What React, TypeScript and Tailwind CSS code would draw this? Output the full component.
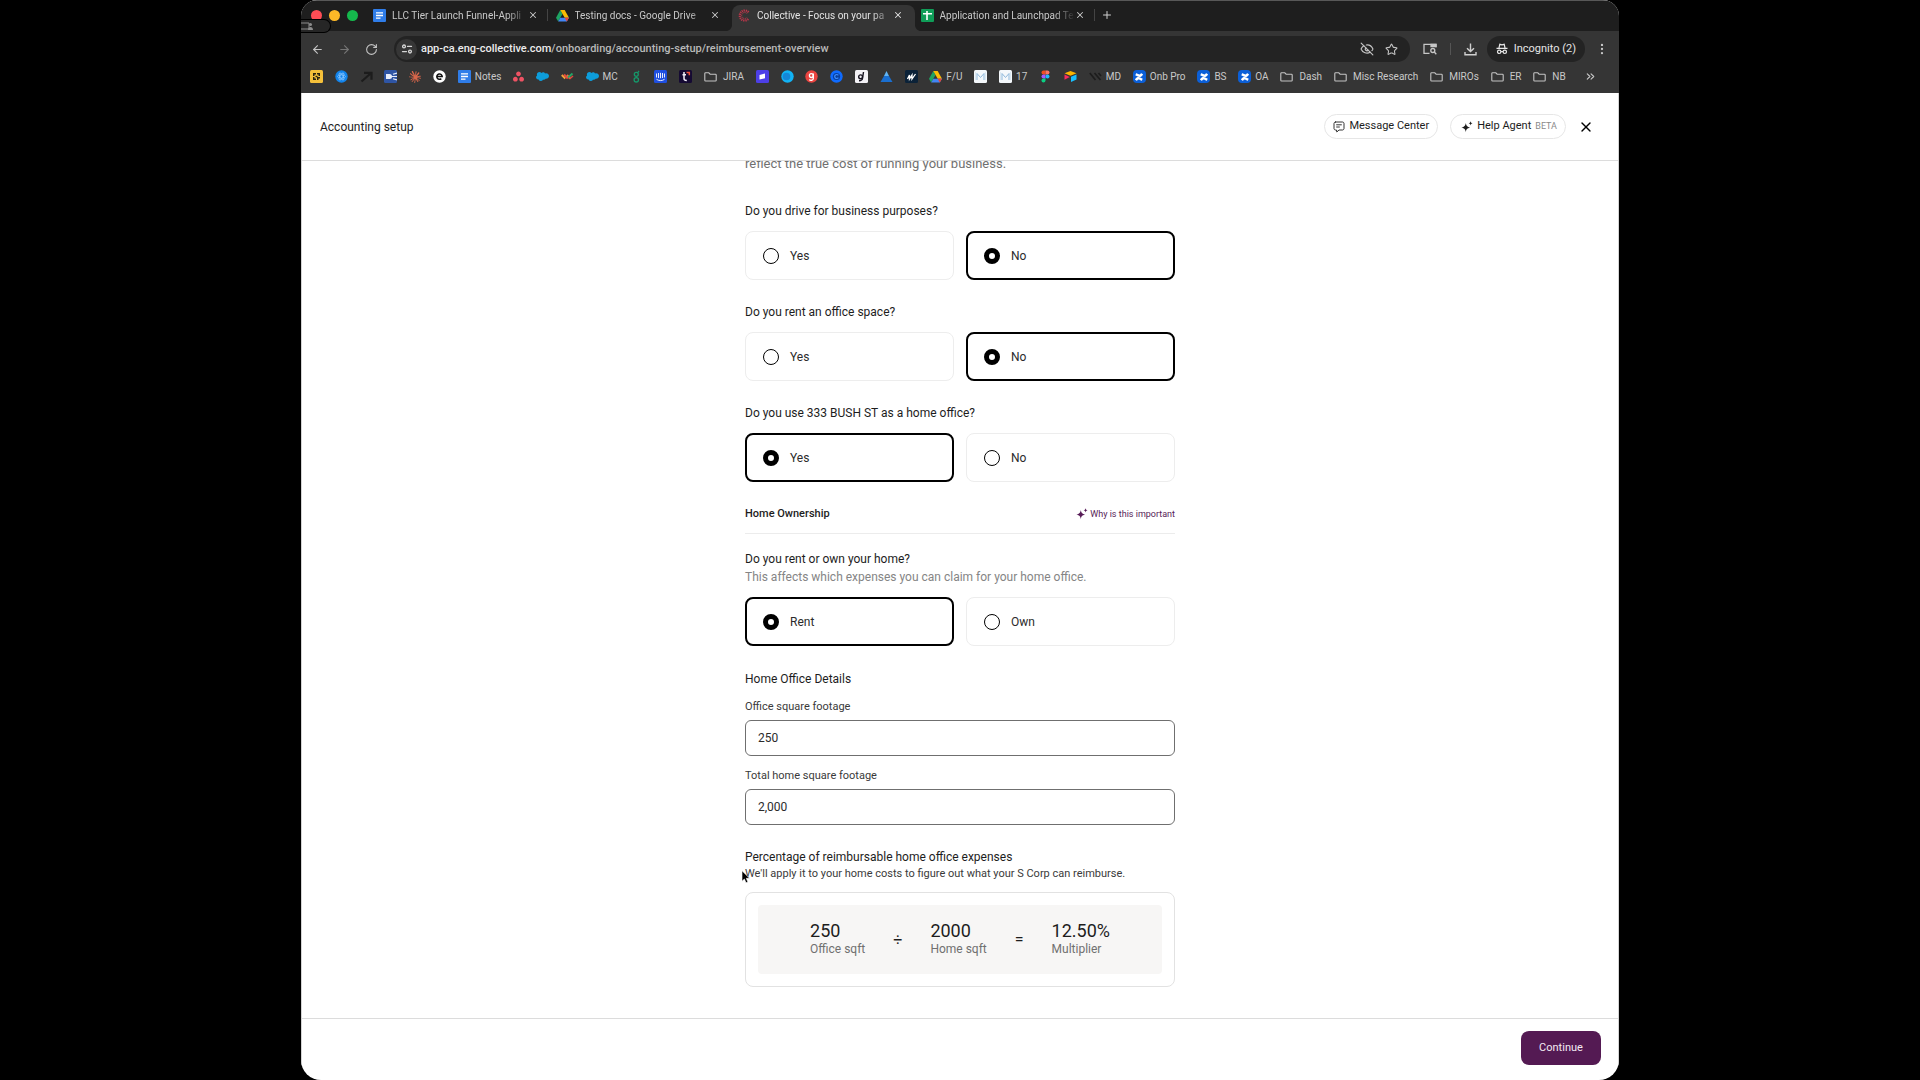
import React, { useState } from "react";
import { ArrowLeft, ArrowRight, RotateCw, Star, X, Plus, EyeOff, MoreVertical, ChevronsRight } from "lucide-react";
import { SiAsana, SiSalesforce, SiClaude, SiConfluence } from "react-icons/si";

/* ---------- icons ---------- */

const DocIcon = () => (
    <svg viewBox="0 0 13 13" className="w-[13px] h-[13px] shrink-0">
        <rect width="13" height="13" rx="1" fill="#2f7de9" />
        <path d="M3 3.8h7M3 6.5h7M3 9.2h4.5" stroke="#fff" strokeWidth="1.3" />
    </svg>
);

const DriveIcon = () => (
    <svg viewBox="0 0 24 22" className="w-[13px] h-[13px] shrink-0">
        <path d="M8 1h8l-4 7z" fill="#188038" />
        <path d="M8 1 0 15l4 7 8-14z" fill="#1ea362" />
        <path d="M16 1 24 15h-8L8 1z" fill="#fbbc04" />
        <path d="M8 15h16l-4 7H4z" fill="#4285f4" />
        <path d="M16 15h8l-4 7z" fill="#ea4335" />
    </svg>
);

const SheetsIcon = () => (
    <svg viewBox="0 0 13 13" className="w-[13px] h-[13px] shrink-0">
        <rect width="13" height="13" rx="1" fill="#0f9d58" />
        <path d="M2 4.8h9M6 2v9" stroke="#fff" strokeWidth="1.6" />
    </svg>
);

const CollectiveIcon = () => (
    <svg viewBox="0 0 13 13" className="w-[13px] h-[13px] shrink-0" fill="none" stroke="#c2364b">
        <path d="M10.5 3.2a5 5 0 1 0 0 6.6" strokeWidth="2.2" strokeDasharray="1.2 .8" />
        <path d="M9 4.6a3 3 0 1 0 0 3.8" strokeWidth="1" strokeDasharray="1 .7" />
    </svg>
);

const FolderIcon = () => (
    <svg viewBox="0 0 13 12" className="w-[13px] h-[12px] mr-[2px] shrink-0" fill="none" stroke="#c4c4c4" strokeWidth="1.1">
        <path d="M.8 2.6c0-.5.3-.8.8-.8h3.2l1.3 1.4h5.3c.5 0 .8.3.8.8v5.2c0 .5-.3.8-.8.8H1.6c-.5 0-.8-.3-.8-.8z" />
    </svg>
);

const Tile = ({ bg, children }: { bg: string; children?: React.ReactNode }) => (
    <svg viewBox="0 0 13 13" className="w-[13px] h-[13px] shrink-0">
        <rect width="13" height="13" rx="1.5" fill={bg} />
        {children}
    </svg>
);

const Disc = ({ bg, children }: { bg: string; children?: React.ReactNode }) => (
    <svg viewBox="0 0 13 13" className="w-[13px] h-[13px] shrink-0">
        <circle cx="6.5" cy="6.5" r="6.2" fill={bg} />
        {children}
    </svg>
);

const Glyph = ({ children }: { children: React.ReactNode }) => (
    <svg viewBox="0 0 13 13" className="w-[13px] h-[13px] shrink-0" fill="none">
        {children}
    </svg>
);

const ConfluenceTile = () => (
    <span className="w-[13px] h-[13px] shrink-0 rounded-sm bg-[#0b5fd8] text-white flex items-center justify-center">
        <SiConfluence size={8} />
    </span>
);

const MTile = () => (
    <Tile bg="#f4f8fb">
        <path d="M3 10V3.5l3.5 4 3.5-4V10" fill="none" stroke="#8fb9dc" strokeWidth="1" />
        <path d="M1.5 2.5v8M11.5 2.5v8" stroke="#b6cfe2" strokeWidth=".8" strokeDasharray="1 1" />
    </Tile>
);

const SparkleIcon = () => (
    <svg viewBox="0 0 12 12" className="w-3 h-3" fill="currentColor">
        <path d="M4.8 2c.5 3 1.300 3.800 4.400 4.600-3.100.8-3.900 1.600-4.400 4.600-.5-3-1.300-3.800-4.400-4.600 3.100-.8 3.900-1.600 4.400-4.600z" />
        <path d="M9.600.3c.3 1.300.7 1.700 2 2-1.300.4-1.700.8-2 2.100-.3-1.300-.8-1.700-2-2.100 1.200-.3 1.700-.7 2-2z" />
    </svg>
);

const MessageIcon = () => (
    <svg viewBox="0 0 12 12" className="w-3 h-3" fill="none" stroke="currentColor" strokeWidth=".9" strokeLinecap="round">
        <path d="M2.500 1h7c.8 0 1.500.7 1.500 1.500v5c0 .8-.7 1.500-1.500 1.500H6l-2.200 2L3.500 9h-1C1.700 9 1 8.300 1 7.500v-5C1 1.700 1.700 1 2.500 1z" />
        <path d="M3.600 3.800h4.800M3.600 6h2.800" />
    </svg>
);

const TuneIcon = () => (
    <svg viewBox="0 0 12 12" className="w-3 h-3" fill="none" stroke="#d6d6d6" strokeWidth="1.300" strokeLinecap="round">
        <circle cx="3" cy="3.400" r="1.400" />
        <path d="M6.500 3.400h4M1.500 8.600h4" />
        <circle cx="9" cy="8.600" r="1.400" />
    </svg>
);

const TabSearchIcon = () => (
    <svg viewBox="0 0 14 12" className="w-[14px] h-3" fill="none" stroke="#c7c7c7" strokeWidth="1.300">
        <path d="M6.500 10.400H1V1.300h12v3" />
        <path d="M8 1.300h5v2.400H8z" fill="#c7c7c7" />
        <circle cx="9.800" cy="7.500" r="2" />
        <path d="m11.300 9 2 2.200" />
    </svg>
);

const DownloadIcon = () => (
    <svg viewBox="0 0 13 13" className="w-[13px] h-[13px]" fill="none" stroke="#d0d0d0" strokeWidth="1.400">
        <path d="M6.500.5v7.800M3 5.200l3.500 3.400L10 5.200M1 9v2.800h11V9" />
    </svg>
);

const IncognitoIcon = () => (
    <svg viewBox="0 0 12 12" className="w-3 h-3" fill="none" stroke="#e6e6e6" strokeWidth="1.200">
        <path d="M3 4.800 3.800 1.300l2.200.6 2.200-.6L9 4.800M.5 5.400h11" />
        <circle cx="3.200" cy="8.800" r="1.700" />
        <circle cx="8.800" cy="8.800" r="1.700" />
        <path d="M4.900 8.600h2.200" />
    </svg>
);

/* ---------- browser data ---------- */

const tabs = [
    { title: "LLC Tier Launch Funnel-Appli", icon: <DocIcon />, active: false },
    { title: "Testing docs - Google Drive", icon: <DriveIcon />, active: false },
    { title: "Collective - Focus on your pa", icon: <CollectiveIcon />, active: true },
    { title: "Application and Launchpad Te", icon: <SheetsIcon />, active: false },
];

const bookmarks: { label?: string; icon: React.ReactNode }[] = [
    {
        icon: (
            <Tile bg="#f5c03a">
                <path d="M3 3h3v1.500H4.500V6H3zM7 3h3v3H8.500V4.500H7zM3 7h1.500v1.500H6V10H3zM7 7h3v1.500H8.500V10H7z" fill="#2b2410" />
                <path d="M5.500 5.800h2v1.400h-2z" fill="#2b2410" />
            </Tile>
        ),
    },
    {
        icon: (
            <Disc bg="#1283ea">
                <g fill="none" stroke="#8cc8ff" strokeWidth=".7">
                    <ellipse cx="6.500" cy="6.500" rx="4" ry="1.600" />
                    <ellipse cx="6.500" cy="6.500" rx="4" ry="1.600" transform="rotate(60 6.500 6.500)" />
                    <ellipse cx="6.500" cy="6.500" rx="4" ry="1.600" transform="rotate(120 6.500 6.500)" />
                </g>
            </Disc>
        ),
    },
    { icon: <Glyph><path d="M1.500 11.500 10 4M4 2.800h7.500v7" stroke="#1c1c1c" strokeWidth="2.200" /></Glyph> },
    {
        icon: (
            <Tile bg="#2f55a4">
                <path d="M2 4h3.500a2.500 2.500 0 0 1 0 5H2z" fill="#e8eefb" />
                <path d="M8 6.500h5M9 4.200 13 3M9 8.800l4 1.200" stroke="#e8eefb" strokeWidth="1.200" />
            </Tile>
        ),
    },
    { icon: <SiClaude size={12} className="text-[#d9664a]" /> },
    { icon: <Disc bg="#fff"><path d="M3.800 6.600h5.400a2.700 2.700 0 1 0-.9 2" fill="none" stroke="#111" strokeWidth="1.500" /></Disc> },
    { label: "Notes", icon: <DocIcon /> },
    { icon: <SiAsana size={11} className="text-[#ee5364]" /> },
    { icon: <SiSalesforce size={13} className="text-[#0d9ddb]" /> },
    {
        icon: (
            <Glyph>
                <path d="m.8 5 3.500 3.500" stroke="#f2a33a" strokeWidth="2" />
                <path d="m3 4.500 3.800 4" stroke="#e2483d" strokeWidth="2" />
                <path d="m6 5 3 3.500" stroke="#f2703a" strokeWidth="2" />
                <path d="M7 7.500 11.500 3.500" stroke="#23a566" strokeWidth="2" />
                <path d="m8.500 9 3.500-3" stroke="#e2483d" strokeWidth="1.500" />
            </Glyph>
        ),
    },
    { label: "MC", icon: <SiSalesforce size={13} className="text-[#0d9ddb]" /> },
    {
        icon: (
            <Glyph>
                <circle cx="6.300" cy="4.300" r="2" stroke="#16976a" strokeWidth="1.300" />
                <circle cx="6.300" cy="9.800" r="2.200" stroke="#16976a" strokeWidth="1.300" />
                <path d="M7.500 3 9 .8" stroke="#16976a" strokeWidth="1.200" />
            </Glyph>
        ),
    },
    {
        icon: (
            <Tile bg="#1f4fe0">
                <path d="M2.500 3.500v4M4.500 3v5M6.500 2.800v5.400M8.500 3v5M10.500 3.500v4M2.500 9.300c2.300 1.700 5.700 1.700 8 0" fill="none" stroke="#fff" strokeWidth=".9" />
            </Tile>
        ),
    },
    {
        icon: (
            <Tile bg="#150a33">
                <path d="M5 2v6.500c0 1.500 1 2 2.800 2M3.500 4.800H7" fill="none" stroke="#f1eef8" strokeWidth="1.500" />
                <path d="M7.500 2.500h2.800v2.800" fill="none" stroke="#f0503c" strokeWidth="1.500" />
            </Tile>
        ),
    },
    { label: "JIRA", icon: <FolderIcon /> },
    { icon: <Tile bg="#4d3fe6"><path d="m3.500 5 5.500-1.500v4.800L3.500 9.500z" fill="#fff" /></Tile> },
    { icon: <Disc bg="#12b3f5"><circle cx="5.500" cy="6.500" r="3.800" fill="#1487d8" /></Disc> },
    {
        icon: (
            <Disc bg="#ea4440">
                <circle cx="6.300" cy="5.600" r="1.900" fill="none" stroke="#fff" strokeWidth="1.300" />
                <path d="M8.300 3.500v5c0 2-3 2.300-4 1" fill="none" stroke="#fff" strokeWidth="1.300" />
            </Disc>
        ),
    },
    {
        icon: (
            <Disc bg="#0f6bff">
                <circle cx="6.500" cy="6.500" r="3.600" fill="#0a3f9c" />
                <path d="M8.300 5.300a2 2 0 1 0 0 2.400" fill="none" stroke="#3a8bff" strokeWidth="1.200" />
            </Disc>
        ),
    },
    {
        icon: (
            <Tile bg="#f3f2f6">
                <circle cx="5.600" cy="6.800" r="1.900" fill="none" stroke="#16131f" strokeWidth="1.400" />
                <path d="M8.500 2 7.500 8.500c-.2 1.700-1.500 2.200-3.500 2.200" fill="none" stroke="#16131f" strokeWidth="1.400" />
            </Tile>
        ),
    },
    {
        icon: (
            <Glyph>
                <path d="M6.500 1 9 6H4z" fill="#5fb4f5" />
                <path d="M4 6h5l3.500 6H.5z" fill="#1a6fd0" />
            </Glyph>
        ),
    },
    { icon: <Tile bg="#0b2238"><path d="M2.500 9 4.500 5v4l2.500-4v4l3.500-5" fill="none" stroke="#fff" strokeWidth="1.300" /></Tile> },
    { label: "F/U", icon: <DriveIcon /> },
    { icon: <MTile /> },
    { label: "17", icon: <MTile /> },
    {
        icon: (
            <Glyph>
                <path d="M4.500.5h2v4h-2a2 2 0 0 1 0-4z" fill="#f24e1e" />
                <path d="M6.500.5h2a2 2 0 0 1 0 4h-2z" fill="#ff7262" />
                <path d="M4.500 4.500h2v4h-2a2 2 0 0 1 0-4z" fill="#a259ff" />
                <circle cx="8.500" cy="6.500" r="2" fill="#1abcfe" />
                <path d="M4.500 8.500h2v2a2 2 0 1 1-2-2z" fill="#0acf83" />
            </Glyph>
        ),
    },
    {
        icon: (
            <Glyph>
                <path d="M6.500 1 12.500 3.300 6.500 5.800.5 3.300z" fill="#fcb400" />
                <path d="m7 6.800 5.500-2.200v5L7 12z" fill="#18bfff" />
                <path d="M.5 4.600 5.800 7 .5 9.800z" fill="#f82b60" />
            </Glyph>
        ),
    },
    { label: "MD", icon: <Glyph><path d="m.8 3 5.700 7M5.500 3l6 7M9.500 3l2.500 3" stroke="#1d1d1d" strokeWidth="1.700" /></Glyph> },
    { label: "Onb Pro", icon: <ConfluenceTile /> },
    { label: "BS", icon: <ConfluenceTile /> },
    { label: "OA", icon: <ConfluenceTile /> },
    { label: "Dash", icon: <FolderIcon /> },
    { label: "Misc Research", icon: <FolderIcon /> },
    { label: "MIROs", icon: <FolderIcon /> },
    { label: "ER", icon: <FolderIcon /> },
    { label: "NB", icon: <FolderIcon /> },
];

/* ---------- browser chrome ---------- */

function TabStrip() {
    return (
        <div className="h-[30px] flex items-stretch bg-[#1e1e1e]">
            <div className="w-[66px] pb-[2px] flex items-center gap-[7px] pl-[10px]">
                <span className="w-[11px] h-[11px] rounded-full bg-[#ff4d55]" />
                <span className="w-[11px] h-[11px] rounded-full bg-[#fdb827]" />
                <span className="w-[11px] h-[11px] rounded-full bg-[#15b84c]" />
            </div>
            <div className="flex w-[730px]">
                {tabs.map((tab, i) => (
                    <div
                        key={tab.title}
                        className={
                            tab.active
                                ? "relative flex-1 min-w-0 mt-1 pb-[6px] flex items-center pl-[6px] pr-[2px] rounded-t-lg bg-[#353535] text-[#e3e3e3]"
                                : "flex-1 min-w-0 pb-[2px] flex items-center pl-[6px] pr-[2px] text-[#c9c9c9]"
                        }
                    >
                        {tab.active && (
                            <>
                                <svg viewBox="0 0 6 6" className="absolute -left-[6px] bottom-0 w-[6px] h-[6px]">
                                    <path d="M6 0v6H0c3.300 0 6-2.700 6-6z" fill="#353535" />
                                </svg>
                                <svg viewBox="0 0 6 6" className="absolute -right-[6px] bottom-0 w-[6px] h-[6px]">
                                    <path d="M0 0v6h6C2.700 6 0 3.300 0 0z" fill="#353535" />
                                </svg>
                            </>
                        )}
                        {tab.icon}
                        <span className="flex-1 min-w-0 ml-[6px] whitespace-nowrap text-[10px] [mask-image:linear-gradient(to_right,black_84%,transparent)]">
                            {tab.title}
                        </span>
                        <button aria-label="Close tab" className="mr-[9px]">
                            <X size={10} strokeWidth={2.5} />
                        </button>
                        <span className={i === 0 || i === 3 ? "w-px h-3 bg-[#444]" : "w-px h-3"} />
                    </div>
                ))}
            </div>
            <button aria-label="New tab" className="ml-1 pb-[2px] text-[#d0d0d0]">
                <Plus size={12} />
            </button>
        </div>
    );
}

function Toolbar() {
    return (
        <div className="h-[36px] flex items-center pl-[10px] pr-[10px] bg-[#353535]">
            <div className="flex items-center gap-[14px] pr-[16px] text-[#c4c4c4]">
                <button aria-label="Back"><ArrowLeft size={13} /></button>
                <button aria-label="Forward" className="text-[#757575]"><ArrowRight size={13} /></button>
                <button aria-label="Reload"><RotateCw size={13} /></button>
            </div>
            <div className="flex-1 h-[26px] flex items-center rounded-full bg-[#232323] pl-[2px] pr-3">
                <span className="w-[21px] h-[21px] rounded-full bg-[#363636] flex items-center justify-center">
                    <TuneIcon />
                </span>
                <span className="flex-1 pl-1 text-[11px] font-medium text-[#b9b9b9]">
                    <span className="text-[#ececec]">app-ca.eng-collective.com</span>
                    /onboarding/accounting-setup/reimbursement-overview
                </span>
                <EyeOff size={14} className="text-[#c4c4c4]" />
                <button aria-label="Bookmark" className="ml-[11px] text-[#c4c4c4]"><Star size={13} /></button>
            </div>
            <div className="flex items-center pl-[13px] text-[#c4c4c4]">
                <TabSearchIcon />
                <span className="w-px h-3 bg-[#555] mx-[13px]" />
                <DownloadIcon />
                <button className="ml-[10px] h-[26px] rounded-full bg-[#232323] px-[9px] flex items-center gap-[6px] text-[11px] text-[#e6e6e6]">
                    <IncognitoIcon /> Incognito (2)
                </button>
                <button aria-label="More" className="ml-[10px]"><MoreVertical size={14} /></button>
            </div>
        </div>
    );
}

function BookmarkBar() {
    return (
        <div className="h-[26px] flex items-center pl-[9px] pr-[22px] bg-[#353535] pb-[7px] text-[#c9c9c9]">
            <div className="flex-1 flex items-center justify-between">
                {bookmarks.map((b, i) => (
                    <a key={i} href="#" className="flex items-center gap-1 text-[10px] whitespace-nowrap">
                        {b.icon}
                        {b.label}
                    </a>
                ))}
            </div>
            <button aria-label="More bookmarks" className="ml-[18px]"><ChevronsRight size={13} /></button>
        </div>
    );
}

/* ---------- form ---------- */

interface ChoiceProps {
    name: string;
    question: string;
    hint?: string;
    options: string[];
    initial: string;
}

function Choice({ name, question, hint, options, initial }: ChoiceProps) {
    const [value, setValue] = useState(initial);

    return (
        <fieldset>
            <legend className="text-[12px] leading-[18px] text-[#1d1d1d]">{question}</legend>
            {hint && <p className="text-[12px] leading-[18px] text-[#858585]">{hint}</p>}
            <div className="mt-[11px] grid grid-cols-2 gap-3">
                {options.map(option => (
                    <label
                        key={option}
                        className={
                            value === option
                                ? "h-[49px] flex items-center gap-[11px] pl-4 rounded-lg border-2 border-black text-[12px] text-[#2b2b2b]"
                                : "h-[49px] flex items-center gap-[11px] pl-[17px] rounded-lg border border-[#ededed] text-[12px] text-[#2b2b2b]"
                        }
                    >
                        <input
                            type="radio"
                            name={name}
                            checked={value === option}
                            onChange={() => setValue(option)}
                            className="appearance-none w-4 h-4 rounded-full bg-white border border-black checked:border-[5px]"
                        />
                        {option}
                    </label>
                ))}
            </div>
        </fieldset>
    );
}

function NumberField({ id, label, initial }: { id: string; label: string; initial: string }) {
    const [value, setValue] = useState(initial);

    return (
        <div>
            <label htmlFor={id} className="block text-[11px] leading-4 text-[#3a3a3a]">{label}</label>
            <input
                id={id}
                value={value}
                onChange={e => setValue(e.target.value)}
                className="mt-[5px] w-full h-9 rounded-md border border-[#6f6f6f] px-3 text-[12px] text-[#2b2b2b] outline-none"
            />
        </div>
    );
}

function Figure({ value, label }: { value: string; label: string }) {
    return (
        <div>
            <div className="text-lg leading-5 text-[#1d1d1d]">{value}</div>
            <div className="text-[12px] leading-[17px] text-[#707070]">{label}</div>
        </div>
    );
}

export default function App() {
    return (
        <div className="h-screen bg-black flex justify-center overflow-hidden">
            <div className="relative w-full max-w-[1318px] flex flex-col rounded-t-[16px] rounded-b-[20px] overflow-hidden bg-white font-['Roboto',sans-serif]">
                <div className="border-t border-[#585858]">
                    <TabStrip />
                    <Toolbar />
                    <BookmarkBar />
                </div>

                {/* screen share pill */}
                <div className="absolute left-0 top-[19px] w-[30px] h-[14px] rounded-r-full border border-l-0 border-black bg-[#262626]">
                    <svg viewBox="0 0 14 10" className="w-[14px] h-[10px] mt-px" fill="none" stroke="#8c8c8c">
                        <path d="M0 2h8v6H0" />
                        <circle cx="9.500" cy="3.500" r="1.500" fill="#8c8c8c" stroke="none" />
                        <path d="M7 9c0-4 5-4 5 0z" fill="#8c8c8c" stroke="none" />
                    </svg>
                </div>

                <div className="flex-1 min-h-0 flex flex-col border-x border-[#d4d4d4]">
                    <header className="h-[68px] shrink-0 flex items-center justify-between border-b border-[#dcdcdc] pl-[18px] pr-6">
                        <h1 className="text-[12px] text-[#1d1d1d]">Accounting setup</h1>
                        <div className="flex items-center gap-3 text-[11px] text-[#1d1d1d]">
                            <button className="h-[25px] flex items-center gap-1 rounded-full border border-[#e6e6e6] px-2">
                                <MessageIcon /> Message Center
                            </button>
                            <button className="h-[25px] flex items-center gap-1 rounded-full border border-[#e6e6e6] pl-[10px] pr-2">
                                <SparkleIcon /> Help Agent
                                <span className="text-[9px] text-[#8a8a8a]">BETA</span>
                            </button>
                            <button aria-label="Close" className="text-black"><X size={16} /></button>
                        </div>
                    </header>

                    <main className="flex-1 min-h-0 overflow-hidden">
                        <div className="w-full max-w-[430px] mx-auto">
                            <p className="-mt-[7px] text-[13px] leading-5 text-[#707070]">reflect the true cost of running your business.</p>

                            <div className="mt-7 space-y-[23px]">
                                <Choice name="drive" question="Do you drive for business purposes?" options={["Yes", "No"]} initial="No" />
                                <Choice name="office" question="Do you rent an office space?" options={["Yes", "No"]} initial="No" />
                                <Choice name="home" question="Do you use 333 BUSH ST as a home office?" options={["Yes", "No"]} initial="Yes" />
                            </div>

                            <div className="mt-6 pb-[11px] flex items-center justify-between border-b border-[#ececec] leading-4">
                                <h2 className="text-[11px] font-medium text-[#1d1d1d]">Home Ownership</h2>
                                <a href="#" className="flex items-center gap-[2px] text-[9px] text-[#571c57]">
                                    <SparkleIcon /> Why is this important
                                </a>
                            </div>

                            <div className="mt-4">
                                <Choice
                                    name="ownership"
                                    question="Do you rent or own your home?"
                                    hint="This affects which expenses you can claim for your home office."
                                    options={["Rent", "Own"]}
                                    initial="Rent"
                                />
                            </div>

                            <h3 className="mt-6 text-[12px] leading-[18px] text-[#1d1d1d]">Home Office Details</h3>
                            <div className="mt-[11px] space-y-3">
                                <NumberField id="office-sqft" label="Office square footage" initial="250" />
                                <NumberField id="home-sqft" label="Total home square footage" initial="2,000" />
                            </div>

                            <h3 className="mt-[23px] text-[12px] leading-[18px] text-[#1d1d1d]">Percentage of reimbursable home office expenses</h3>
                            <p className="text-[11px] leading-[15px] text-[#3a3a3a]">
                                We'll apply it to your home costs to figure out what your S Corp can reimburse.
                            </p>
                            <div className="mt-[11px] p-3 rounded-lg border border-[#e2e2e2]">
                                <div className="h-[69px] rounded-sm bg-[#f7f6f5] flex items-center justify-center gap-7 text-[#1d1d1d]">
                                    <Figure value="250" label="Office sqft" />
                                    <span>÷</span>
                                    <Figure value="2000" label="Home sqft" />
                                    <span>=</span>
                                    <Figure value="12.50%" label="Multiplier" />
                                </div>
                            </div>
                        </div>
                    </main>

                    <footer className="h-[62px] shrink-0 flex items-start justify-end border-t border-[#dcdcdc] pt-3 pr-[17px]">
                        <button className="h-[34px] w-20 rounded-lg bg-[#541a53] text-[11px] text-[#f3ebf3]">Continue</button>
                    </footer>
                </div>

                {/* mouse pointer */}
                <svg viewBox="0 0 10 14" className="absolute left-[440px] top-[870px] w-[10px] h-[14px]">
                    <path d="M1 .8v10.400l2.400-2.200 1.600 3.800 1.900-.8-1.600-3.700h3.300z" fill="#000" stroke="#fff" strokeWidth=".6" />
                </svg>
            </div>
        </div>
    );
}
